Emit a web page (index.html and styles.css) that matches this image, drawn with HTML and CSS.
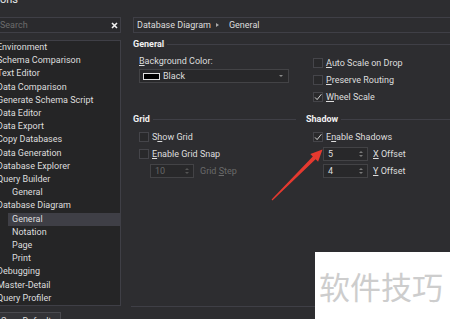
FILE: index.html
```html
<!DOCTYPE html>
<html lang="en">

<head>
    <meta charset="UTF-8">
    <meta name="viewport" content="width=device-width, initial-scale=1.0">
    <title>Options</title>
    <link rel="stylesheet" href="styles.css">
</head>

<body>
    <div class="window-title">Options</div>

    <div class="main">
        <div class="sidebar">
            <div class="search">
                <span class="search-hint">Search</span>
                <svg class="search-clear" width="7" height="7" viewBox="0 0 7 7">
                    <path d="M1 1L6 6M6 1L1 6" stroke="#f2f2f2" stroke-width="1.6" />
                </svg>
            </div>
            <ul class="tree">
                <li>Environment</li>
                <li>Schema Comparison</li>
                <li>Text Editor</li>
                <li>Data Comparison</li>
                <li>Generate Schema Script</li>
                <li>Data Editor</li>
                <li>Data Export</li>
                <li>Copy Databases</li>
                <li>Data Generation</li>
                <li>Database Explorer</li>
                <li>Query Builder</li>
                <li class="sub">General</li>
                <li>Database Diagram</li>
                <li class="sub selected">General</li>
                <li class="sub">Notation</li>
                <li class="sub">Page</li>
                <li class="sub">Print</li>
                <li>Debugging</li>
                <li>Master-Detail</li>
                <li>Query Profiler</li>
            </ul>
            <div class="defaults-btn">Save Defaults...</div>
        </div>

        <div class="content">
            <div class="breadcrumb">Database Diagram<span class="crumb-arrow"></span>General</div>

            <div class="section-title general-title">General</div>
            <div class="cols general-body">
                <div class="col-left">
                    <div class="field-label"><u>B</u>ackground Color:</div>
                    <div class="dropdown">
                        <span class="swatch"></span>Black
                        <span class="drop-arrow"></span>
                    </div>
                </div>
                <div class="col-right">
                    <div class="check"><span class="box"></span><u>A</u>uto Scale on Drop</div>
                    <div class="check"><span class="box"></span><u>P</u>reserve Routing</div>
                    <div class="check">
                        <span class="box"><svg width="8" height="8" viewBox="0 0 8 8"><path d="M1 4.4L3.1 6.6L7.4 1.2" /></svg></span><u>W</u>heel Scale
                    </div>
                </div>
            </div>

            <div class="cols lower">
                <div>
                    <div class="section-title">Grid</div>
                    <div class="section-body grid-body">
                        <div class="check"><span class="box"></span>S<u>h</u>ow Grid</div>
                        <div class="check"><span class="box"></span><u>E</u>nable Grid Snap</div>
                        <div class="spin-row indent">
                            <div class="spinner disabled">
                                <span>10</span>
                                <span class="spin-btns"><i class="up"></i><i class="down"></i></span>
                            </div>
                            <span class="spin-label disabled-text">Grid <u>S</u>tep</span>
                        </div>
                    </div>
                </div>
                <div>
                    <div class="section-title">Shadow</div>
                    <div class="section-body shadow-body">
                        <div class="check">
                            <span class="box"><svg width="8" height="8" viewBox="0 0 8 8"><path d="M1 4.4L3.1 6.6L7.4 1.2" /></svg></span>E<u>n</u>able Shadows
                        </div>
                        <div class="spin-row">
                            <div class="spinner">
                                <span>5</span>
                                <span class="spin-btns"><i class="up"></i><i class="down"></i></span>
                            </div>
                            <span class="spin-label"><u>X</u> Offset</span>
                        </div>
                        <div class="spin-row">
                            <div class="spinner">
                                <span>4</span>
                                <span class="spin-btns"><i class="up"></i><i class="down"></i></span>
                            </div>
                            <span class="spin-label"><u>Y</u> Offset</span>
                        </div>
                    </div>
                </div>
            </div>
        </div>
    </div>

    <!-- annotation drawn over the dialog -->
    <svg class="red-arrow" width="450" height="319" viewBox="0 0 450 319">
        <polygon points="271.6,199.6 312.8,156.4 310.3,153.9 322.5,149.5 318.1,161.7 315.6,159.2 272.4,200.4" fill="#e5392f" />
    </svg>

    <div class="watermark">软件技巧</div>
</body>

</html>
```

FILE: styles.css
```css
body {
    margin: 0;
    width: 450px;
    height: 319px;
    overflow: hidden;
    position: relative;
    background-color: #2d2d30;
    color: #dedede;
    font-family: Roboto, "Liberation Sans", sans-serif;
    font-size: 9px;
}

u {
    text-decoration-thickness: 1px;
}

.window-title {
    height: 17px;
    margin-left: -20px;
    font-size: 11px;
    line-height: 0;
    color: #e8e8e8;
}

.main {
    display: flex;
}

/* left navigation */
.sidebar {
    width: 131px;
    margin-left: -10px;
    flex-shrink: 0;
}

.search {
    height: 16px;
    box-sizing: border-box;
    border: 1px solid #3f3f46;
    background-color: #2a2a2d;
    display: flex;
    align-items: center;
    justify-content: space-between;
    padding: 0 2px 0 9px;
}

.search-hint {
    color: #6c6c6c;
}

.tree {
    list-style: none;
    margin: 7px 0 0;
    padding: 0;
    height: 266px;
    box-sizing: border-box;
    border: 1px solid #3f3f46;
    background-color: #252526;
}

.tree li {
    line-height: 13.2px;
    padding-left: 6px;
    white-space: nowrap;
}

.tree li.sub {
    margin-left: 17px;
    padding-left: 4px;
}

.tree li.selected {
    background-color: #3f3f46;
}

.defaults-btn {
    margin-top: 6px;
    width: 71px;
    height: 18px;
    box-sizing: border-box;
    border: 1px solid #4a4a4f;
    background-color: #333337;
    padding: 3px 0 0 10px;
    white-space: nowrap;
    overflow: hidden;
}

/* right side */
.content {
    flex: 1;
    margin-left: 10px;
    padding-left: 2px;
    height: 290px;
    box-sizing: border-box;
    border-bottom: 1px solid #3f3f46;
}

.breadcrumb {
    height: 16px;
    box-sizing: border-box;
    margin-right: -4px;
    border: 1px solid #3f3f46;
    padding-left: 3px;
    line-height: 14px;
    display: flex;
    align-items: center;
}

.crumb-arrow {
    width: 0;
    height: 0;
    border-top: 2.5px solid transparent;
    border-bottom: 2.5px solid transparent;
    border-left: 3px solid #a8a8a8;
    margin: 0 10px 0 5px;
}

.section-title {
    display: flex;
    align-items: center;
    height: 12px;
    font-weight: bold;
    color: #f0f0f0;
}

.section-title::after {
    content: "";
    flex: 1;
    margin-left: 3px;
    border-top: 1px solid #3f3f46;
}

.general-title {
    margin-top: 5px;
}

.cols {
    display: grid;
    grid-template-columns: 163px 1fr;
    column-gap: 10px;
}

.general-body {
    margin-top: 4px;
}

.col-left {
    padding-left: 6px;
}

.col-right {
    padding-left: 7px;
}

.field-label {
    height: 15px;
    line-height: 15px;
}

.dropdown {
    width: 150px;
    height: 14px;
    box-sizing: border-box;
    border: 1px solid #434346;
    background-color: #28282a;
    display: flex;
    align-items: center;
}

.swatch {
    width: 15px;
    height: 5px;
    background-color: #000;
    border: 1px solid #e0e0e0;
    margin: 0 3px 0 3px;
}

.drop-arrow {
    margin-left: auto;
    margin-right: 5px;
    width: 0;
    height: 0;
    border-left: 2px solid transparent;
    border-right: 2px solid transparent;
    border-top: 2px solid #8a8a8a;
}

.check {
    height: 17px;
    display: flex;
    align-items: center;
}

.box {
    width: 10px;
    height: 10px;
    box-sizing: border-box;
    border: 1px solid #45454a;
    background-color: #29292b;
    margin-right: 3px;
    display: flex;
    align-items: center;
    justify-content: center;
}

.box svg path {
    fill: none;
    stroke: #d4d4d4;
    stroke-width: 1;
}

.lower {
    margin-top: 8px;
}

.section-body {
    margin-top: 3px;
}

.grid-body {
    padding-left: 6px;
}

.shadow-body {
    padding-left: 7px;
}

.spin-row {
    height: 17px;
    display: flex;
    align-items: center;
}

.spin-row.indent {
    padding-left: 11px;
}

.shadow-body .spin-row {
    padding-left: 10px;
}

.spinner {
    width: 45px;
    height: 14px;
    box-sizing: border-box;
    border: 1px solid #434346;
    background-color: #28282a;
    display: flex;
    align-items: center;
    justify-content: space-between;
    padding-left: 4px;
}

.spin-btns {
    display: flex;
    flex-direction: column;
    gap: 2px;
    margin-right: 4px;
}

.spin-btns i {
    width: 0;
    height: 0;
    border-left: 2px solid transparent;
    border-right: 2px solid transparent;
}

.spin-btns .up {
    border-bottom: 2px solid #7a7a7a;
}

.spin-btns .down {
    border-top: 2px solid #7a7a7a;
}

.spin-label {
    margin-left: 5px;
}

.spinner.disabled {
    width: 44px;
    color: #666;
}

.spinner.disabled .up {
    border-bottom-color: #555;
}

.spinner.disabled .down {
    border-top-color: #555;
}

.disabled-text {
    margin-left: 6px;
    color: #6a6a6a;
}

/* overlays */
.red-arrow {
    position: absolute;
    left: 0;
    top: 0;
    pointer-events: none;
}

.watermark {
    position: absolute;
    left: 315px;
    top: 252px;
    width: 135px;
    height: 67px;
    box-sizing: border-box;
    background-color: #fff;
    padding: 18px 0 0 4px;
    font-family: "Noto Sans CJK SC", sans-serif;
    font-size: 31px;
    line-height: 31px;
    color: #cdcdcd;
    white-space: nowrap;
}
```
